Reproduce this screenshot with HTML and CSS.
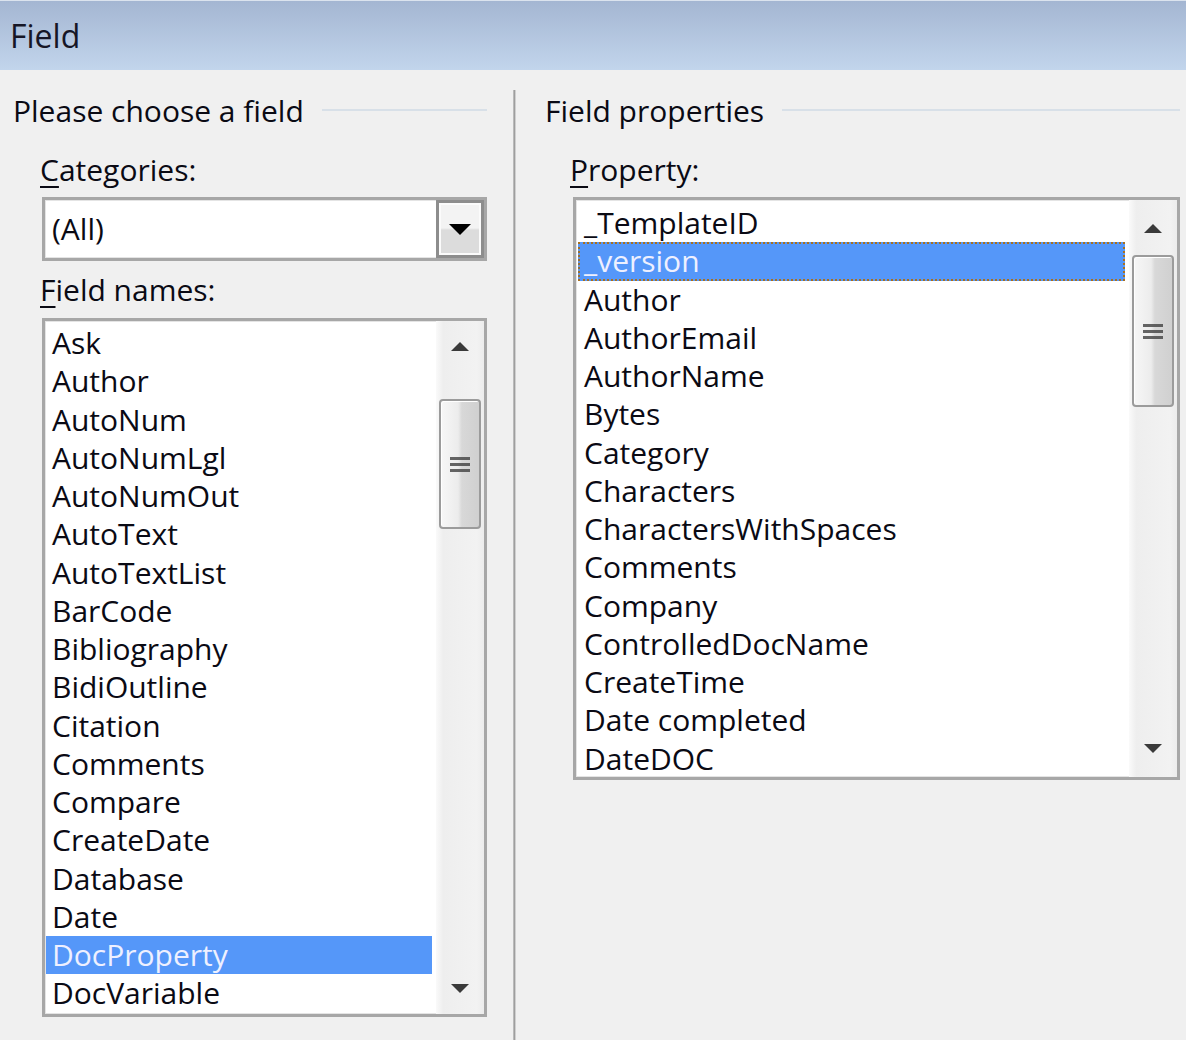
FILE: index.html
```html
<!DOCTYPE html>
<html>
<head>
<meta charset="utf-8">
<link rel="stylesheet" href="styles.css">
</head>
<body>
<div class="titlebar">Field</div>
<div class="main">
  <section class="col col-left">
    <div class="group-head"><span>Please choose a field</span><span class="rule"></span></div>
    <div class="label"><u>C</u>ategories:</div>
    <div class="combo">
      <div class="combo-value">(All)</div>
      <div class="combo-btn"><span class="tri-down"></span></div>
    </div>
    <div class="label label-gap"><u>F</u>ield names:</div>
    <div class="listbox lb-left">
      <ul class="items">
        <li>Ask</li><li>Author</li><li>AutoNum</li><li>AutoNumLgl</li><li>AutoNumOut</li><li>AutoText</li><li>AutoTextList</li><li>BarCode</li><li>Bibliography</li><li>BidiOutline</li><li>Citation</li><li>Comments</li><li>Compare</li><li>CreateDate</li><li>Database</li><li>Date</li><li class="sel">DocProperty</li><li>DocVariable</li>
      </ul>
      <div class="sbar sbar-left">
        <div class="arrow-up"></div>
        <div class="thumb"><span class="grip"></span></div>
        <div class="arrow-down"></div>
      </div>
    </div>
  </section>
  <div class="divider"></div>
  <section class="col col-right">
    <div class="group-head"><span>Field properties</span><span class="rule"></span></div>
    <div class="label"><u>P</u>roperty:</div>
    <div class="listbox lb-right">
      <ul class="items">
        <li>_TemplateID</li><li class="sel focus">_version</li><li>Author</li><li>AuthorEmail</li><li>AuthorName</li><li>Bytes</li><li>Category</li><li>Characters</li><li>CharactersWithSpaces</li><li>Comments</li><li>Company</li><li>ControlledDocName</li><li>CreateTime</li><li>Date completed</li><li>DateDOC</li>
      </ul>
      <div class="sbar sbar-right">
        <div class="arrow-up"></div>
        <div class="thumb"><span class="grip"></span></div>
        <div class="arrow-down"></div>
      </div>
    </div>
  </section>
</div>
</body>
</html>
```

FILE: styles.css
```css
html, body {
  margin: 0;
  padding: 0;
}
body {
  width: 1186px;
  height: 1040px;
  overflow: hidden;
  background: #f0f0f0;
  font-family: "Open Sans", "Noto Sans", "DejaVu Sans", sans-serif;
  font-size: 30px;
  color: #0a0a14;
}
.titlebar {
  height: 69px;
  line-height: 70px;
  padding-left: 10px;
  border-top: 1px solid #dbe3ee;
  background: linear-gradient(#a4b6d2, #c2d5ec);
  color: #161626;
  font-size: 32px;
}
.main {
  display: flex;
  height: 970px;
}
.col-left {
  width: 474px;
  padding: 20px 26px 0 13px;
}
.col-right {
  flex: 1;
  padding: 20px 6px 0 29px;
}
.divider {
  width: 3px;
  margin-top: 20px;
  background: linear-gradient(90deg, #c8c8c8, #9e9e9e 50%, #e8e8e8);
}
.group-head {
  display: flex;
  align-items: center;
  height: 40px;
}
.rule {
  flex: 1;
  height: 2px;
  margin-left: 18px;
  background: #d8e0e8;
}
.label {
  height: 40px;
  line-height: 40px;
  margin: 20px 0 7px 27px;
}
.label-gap {
  margin-top: 9px;
  margin-bottom: 8px;
}
.col-right .label {
  margin-left: 25px;
}
u {
  text-decoration-thickness: 2px;
  text-underline-offset: 5px;
}
.combo {
  display: flex;
  margin-left: 29px;
  height: 58px;
  border: 3px solid #a7a7a7;
  box-shadow: inset 0 0 0 1px #e4e4e4;
  background: #fff;
}
.combo-value {
  flex: 1;
  line-height: 58px;
  padding-left: 7px;
}
.combo-btn {
  width: 42px;
  border: 3px solid #8d8d8d;
  box-shadow: inset 0 0 0 2px #fbfbfb;
  background: linear-gradient(#f3f3f3 0 48%, #dcdcdc 52% 100%);
  display: flex;
  align-items: center;
  justify-content: center;
}
.tri-down {
  width: 0;
  height: 0;
  border-left: 11px solid transparent;
  border-right: 11px solid transparent;
  border-top: 11px solid #000;
}
.listbox {
  display: flex;
  border: 3px solid #a7a7a7;
  box-shadow: inset 0 0 0 1px #e4e4e4;
  background: #fff;
}
.lb-left {
  margin-left: 29px;
  height: 693px;
}
.lb-right {
  margin-left: 28px;
  height: 577px;
}
.items {
  list-style: none;
  margin: 0;
  flex: 1;
  overflow: hidden;
}
.lb-left .items {
  padding: 3px 4px 0 1px;
}
.lb-right .items {
  padding: 4px 4px 0 2px;
}
.items li {
  box-sizing: border-box;
  height: 38.25px;
  line-height: 37px;
  padding-left: 6px;
  white-space: nowrap;
}
.items li.sel {
  background: #5597f9;
  color: #eef0ff;
}
.items li.focus {
  border: 2px dotted #a8701f;
  padding-left: 4px;
  line-height: 33px;
}
.sbar {
  width: 48px;
  display: flex;
  flex-direction: column;
  align-items: center;
  background: linear-gradient(90deg, #fafafa, #eeeeee 15%, #f2f2f2 85%, #ececec);
}
.sbar-left .arrow-up { margin-top: 21px; }
.sbar-left .thumb { margin-top: 48px; height: 126px; }
.sbar-left .arrow-down { margin-top: auto; margin-bottom: 21px; }
.sbar-right .arrow-up { margin-top: 24px; }
.sbar-right .thumb { margin-top: 22px; height: 148px; width: 38px; }
.sbar-right .arrow-down { margin-top: auto; margin-bottom: 24px; }
.arrow-up {
  width: 0;
  height: 0;
  border-left: 9px solid transparent;
  border-right: 9px solid transparent;
  border-bottom: 9px solid #3a3a3a;
}
.arrow-down {
  width: 0;
  height: 0;
  border-left: 9px solid transparent;
  border-right: 9px solid transparent;
  border-top: 9px solid #3a3a3a;
}
.thumb {
  width: 38px;
  border: 2px solid #9b9b9b;
  border-radius: 4px;
  box-shadow: inset 1px 1px 0 #ffffff;
  background: linear-gradient(90deg, #f7f7f7, #ececec 45%, #d8d8d8 55%, #d0d0d0);
  display: flex;
  align-items: center;
  justify-content: center;
}
.grip {
  width: 20px;
  height: 15px;
  background: repeating-linear-gradient(#404040 0 3px, transparent 3px 6px);
  opacity: 0.8;
}
```
